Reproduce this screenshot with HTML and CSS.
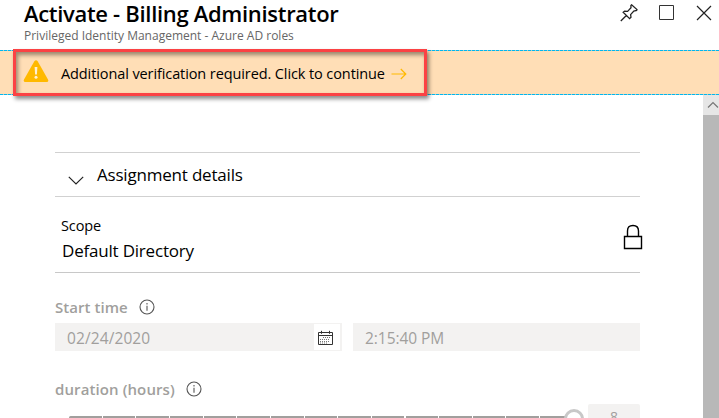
FILE: index.html
```html
<!DOCTYPE html>
<html lang="en">
<head>
<meta charset="utf-8">
<title>Activate - Billing Administrator</title>
<link rel="stylesheet" href="styles.css">
</head>
<body>
<header class="header">
  <div class="titles">
    <h1 class="title">Activate - Billing Administrator</h1>
    <p class="subtitle">Privileged Identity Management - Azure AD roles</p>
  </div>
  <div class="actions">
    <svg class="pin" width="18" height="18" viewBox="0 0 18 18"><path d="M.8 17 6.6 11.2M3.2 8.3 9.6 14.6 11 13.2 10.6 10.6 13.8 7 16.6 6.4 17 5.6 11.6.8 10.9 1.5 11 3.8 7.6 7.4 4.6 7.2Z"/></svg>
    <svg class="maximize" width="16" height="16" viewBox="0 0 16 16"><path d="M1.5 1.500h14v14h-14z"/></svg>
    <svg class="close" width="16" height="16" viewBox="0 0 16 16"><path d="M1 1l14 14M15 1 1 15"/></svg>
  </div>
</header>
<div class="banner">
  <div class="callout">
    <svg class="warn" width="26" height="23" viewBox="0 0 26 23"><path class="warn-shape" d="M11.2 1.6Q13-.9 14.8 1.6L25 19.6Q26 22 23.6 22H2.4Q0 22 1 19.6Z"/><path class="warn-mark" d="M11.6 7h2.8l-.5 7.6h-1.8z"/><circle class="warn-mark" cx="13" cy="17.3" r="1.5"/></svg>
    <span class="message">Additional verification required. Click to continue</span>
    <svg class="arrow" width="16" height="12" viewBox="0 0 16 12"><path d="M.5 6h14M9.8 1l5 5-5 5"/></svg>
  </div>
</div>
<div class="body">
  <main class="content">
    <section class="section-head">
      <svg class="chevron" width="16" height="9" viewBox="0 0 16 9"><path d="M.8.8 8 8 15.2.8"/></svg>
      <h2 class="section-title">Assignment details</h2>
    </section>
    <section class="scope">
      <div>
        <div class="scope-label">Scope</div>
        <div class="scope-value">Default Directory</div>
      </div>
      <svg class="lock" width="20" height="26" viewBox="0 0 20 26"><path d="M1.5 12.5h17v12h-17zM4.5 12.500V7Q4.500 1.500 10 1.500T15.500 7v5.500"/></svg>
    </section>
    <div class="label-row">
      <span class="label start">Start time</span>
      <svg class="info" width="16" height="16" viewBox="0 0 16 16"><circle cx="8" cy="8" r="7"/><path d="M8 6.700v5M8 4v1.400"/></svg>
    </div>
    <div class="fields">
      <div class="field"><span class="date">02/24/2020</span>
        <span class="calendar"><svg width="16" height="16" viewBox="0 0 16 16"><path class="cal-frame" d="M1.500 2.500h14v12h-14zM1.500 5.500h14M4.500 .8v3M12.500 .8v3"/><path class="cal-days" d="M6 7.500h7M3 9.500h10M3 11.500h10M3 13h7"/></svg></span>
      </div>
      <div class="field"><span class="time">2:15:40 PM</span></div>
    </div>
    <div class="label-row second">
      <span class="label duration">duration (hours)</span>
      <svg class="info" width="16" height="16" viewBox="0 0 16 16"><circle cx="8" cy="8" r="7"/><path d="M8 6.700v5M8 4v1.400"/></svg>
    </div>
    <div class="slider-row">
      <div class="slider"><div class="track"></div><div class="handle"></div></div>
      <div class="hours">8</div>
    </div>
  </main>
  <div class="scrollbar">
    <div class="scroll-up"><svg width="12" height="8" viewBox="0 0 12 8"><path d="M1 6.500 6 1.500l5 5"/></svg></div>
    <div class="thumb"></div>
  </div>
</div>
</body>
</html>
```

FILE: styles.css
```css
* { box-sizing: border-box; }
html, body { height: 100%; margin: 0; overflow: hidden; }
body { display: flex; flex-direction: column; background: #fff; color: #000; font-family: "Open Sans", "Noto Sans", sans-serif; white-space: nowrap; }
svg { display: block; flex: none; fill: none; stroke: #222; }
h1, h2, p { margin: 0; }
.header { height: 50px; flex: none; display: flex; justify-content: space-between; padding: 0 7px 0 24px; }
.title { height: 28px; font-size: 22px; line-height: 26px; font-weight: 600; letter-spacing: -.31px; }
.subtitle { font-size: 12px; line-height: 16px; color: #666; letter-spacing: 0; }
.actions { display: flex; align-items: flex-start; padding-top: 4px; }
.pin { stroke-width: 1.3; }
.maximize { margin: 0 0 0 20px; stroke: #333; }
.close { margin: 1px 0 0 22px; stroke-width: 1.2; }
.banner { height: 45px; flex: none; background: repeating-linear-gradient(90deg, #00b7f0 0 3px, #b4c8bd 3px 4px) 0 0 / 100% 1px no-repeat, repeating-linear-gradient(90deg, #00b7f0 0 3px, #b4c8bd 3px 4px) 0 100% / 100% 1px no-repeat, #ffdeb6; padding-left: 13px; }
.callout { position: relative; top: -1px; width: 414px; height: 47px; border: 3px solid #fb4244; display: flex; align-items: center; padding-left: 7px; box-shadow: 2px 3px 4px rgba(0,0,0,.45), inset 2px 3px 4px rgba(0,0,0,.4); }
.warn { stroke: none; margin-top: -3px; }
.warn-shape { fill: #ffb900; }
.warn-mark { fill: #fff0d5; }
.message { margin-left: 12px; width: 324px; font-size: 14.5px; line-height: 20px; letter-spacing: -.1px; padding-top: 2px; }
.arrow { margin: 2px 0 0 6px; stroke: #ffb900; stroke-width: 1.2; }
.body { flex: 1; min-height: 0; display: flex; justify-content: space-between; }
.content { width: 585px; margin-left: 55px; padding-top: 57px; }
.section-head { height: 45px; display: flex; border: solid #d1d1d1; border-width: 1px 0; }
.chevron { margin: 23px 0 0 13px; stroke-width: 1.2; }
.section-title { margin-left: 13px; font-size: 17px; line-height: 24px; padding-top: 10px; font-weight: 400; letter-spacing: -.2px; }
.scope { height: 76px; display: flex; justify-content: space-between; border-bottom: 1px solid #c8c8c8; }
.scope-label { padding: 18px 0 0 6px; font-size: 14.5px; line-height: 22px; letter-spacing: -.1px; }
.scope-value { padding-left: 7px; font-size: 17px; line-height: 27px; letter-spacing: -.2px; }
.lock { margin: 27px -3px 0 0; stroke: #000; stroke-width: 1.4; }
.label-row { height: 20px; margin-top: 24px; display: flex; align-items: center; gap: 11px; }
.label { color: #a19f9d; font-size: 15px; line-height: 20px; font-weight: 600; }
.start { width: 73px; letter-spacing: .05px; }
.duration { width: 120px; letter-spacing: .1px; }
.info { stroke: #555; stroke-width: 1.1; position: relative; left: -.5px; }
.fields { display: grid; grid-template-columns: 287px 287px; gap: 11px; margin-top: 6px; }
.field { height: 28px; display: flex; justify-content: space-between; background: #f3f2f1; padding-left: 12px; font-size: 15.5px; line-height: 30px; color: #a19f9d; }
.date { letter-spacing: .1px; }
.time { letter-spacing: -.05px; }
.calendar { width: 26px; height: 26px; margin: 1px 2px 0 0; background: #fff; display: grid; place-items: center; }
.calendar svg { margin-left: -4px; margin-top: 2px; }
.cal-frame { stroke: #333; }
.cal-days { stroke: #777; stroke-dasharray: 1 1; }
.second { margin-top: 28px; }
.slider-row { display: flex; justify-content: space-between; margin-top: 5px; }
.slider { position: relative; width: 519px; height: 30px; margin-left: 14px; padding-top: 12px; }
.track { width: 505px; height: 3px; border-radius: 2px 0 0 2px; background: repeating-linear-gradient(90deg, #a19f9d 0 32.6px, #fff 32.6px 33.65px); }
.handle { position: absolute; left: 495px; top: 5px; width: 20px; height: 20px; border: 3px solid #c8c8c8; border-radius: 50%; background: #fff; }
.hours { width: 52px; height: 28px; background: #f3f2f1; border-radius: 2px; text-align: center; font-size: 14px; line-height: 26px; color: #a19f9d; }
.scrollbar { width: 16px; background: #b8b8b8; }
.scroll-up { height: 20px; background: #e6e6e6; display: grid; place-items: center; padding-left: 3px; }
.scroll-up svg { stroke: #777; stroke-width: 1.2; }
```
